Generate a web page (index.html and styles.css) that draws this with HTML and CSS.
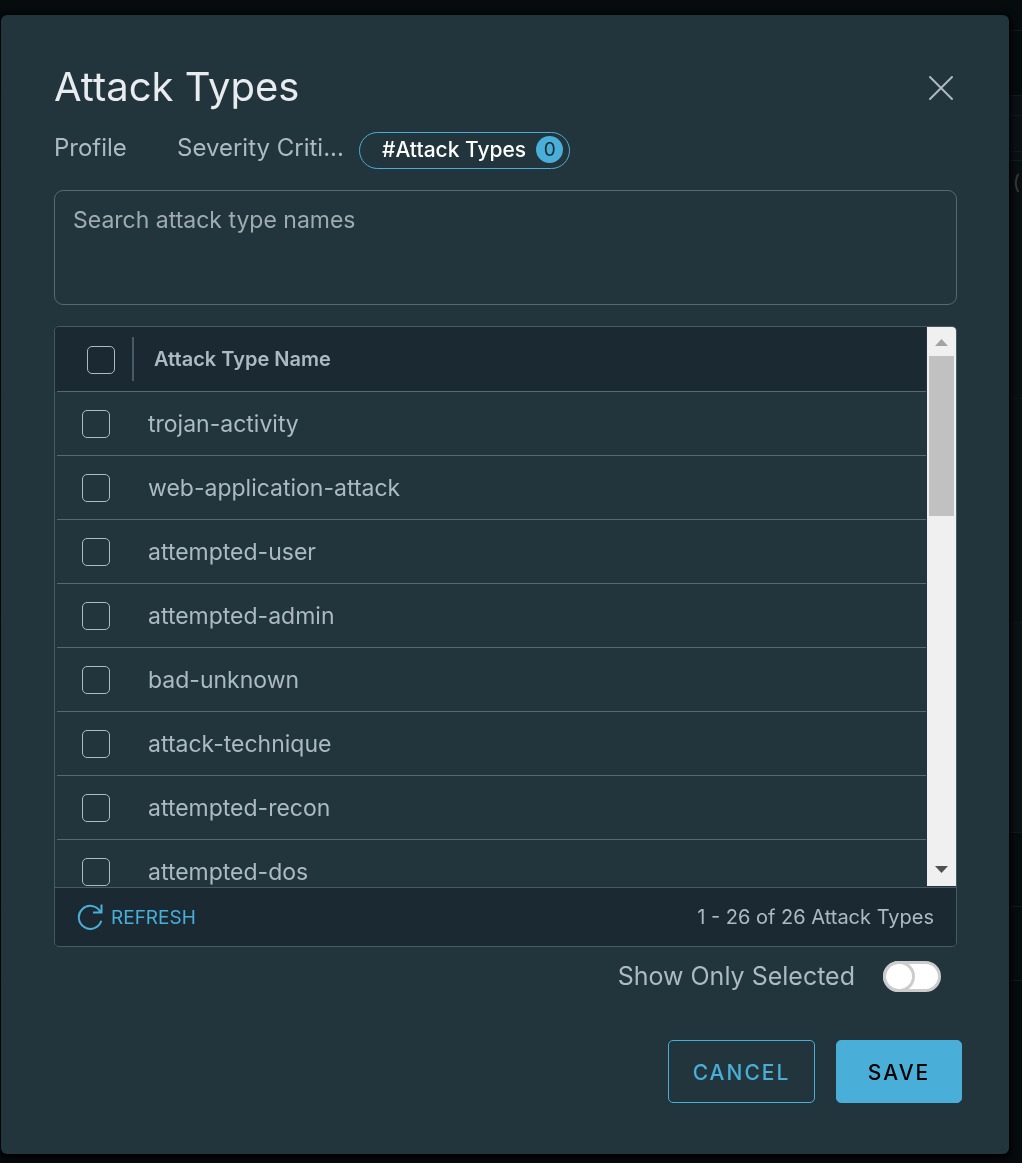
FILE: index.html
```html
<!DOCTYPE html>
<html lang="en">
<head>
<meta charset="utf-8">
<meta name="viewport" content="width=device-width, initial-scale=1">
<title>Attack Types</title>
<link rel="stylesheet" href="styles.css">
</head>
<body>
<div class="backdrop" aria-hidden="true">
  <div class="band band-30"></div>
  <div class="band band-65"></div>
  <div class="band band-20"></div>
  <div class="band band-36"></div>
  <div class="band band-9"></div>
  <div class="band band-238 dashed">(</div>
  <div class="band band-224 dashed"></div>
  <div class="band band-210"></div>
  <div class="band band-74"></div>
  <div class="band band-74"></div>
</div>
<main class="layer">
  <section class="dialog" role="dialog" aria-labelledby="dialog-title">
    <header class="dialog-header">
      <h1 class="title" id="dialog-title">Attack Types</h1>
      <button class="close" type="button" aria-label="Close">
        <svg width="26" height="26" viewBox="0 0 26 26"><path d="M2 2 24 24M24 2 2 24"/></svg>
      </button>
    </header>
    <nav class="tabs">
      <a class="tab tab-profile" href="#profile">Profile</a>
      <a class="tab tab-severity" href="#severity">Severity Criti...</a>
      <a class="tab-active" href="#types">#Attack Types <span class="badge">0</span></a>
    </nav>
    <textarea class="search" aria-label="Search attack type names" placeholder="Search attack type names"></textarea>
    <div class="grid">
      <div class="grid-body">
        <div class="list">
          <table class="table">
            <thead>
              <tr><th class="cell-check"><input class="check" type="checkbox" aria-label="Select all"></th><th class="cell-name" scope="col">Attack Type Name</th></tr>
            </thead>
            <tbody>
              <tr><td class="cell-check"><input class="check" type="checkbox" id="t1"></td><td class="cell-name"><label for="t1">trojan-activity</label></td></tr>
              <tr><td class="cell-check"><input class="check" type="checkbox" id="t2"></td><td class="cell-name"><label for="t2">web-application-attack</label></td></tr>
              <tr><td class="cell-check"><input class="check" type="checkbox" id="t3"></td><td class="cell-name"><label for="t3">attempted-user</label></td></tr>
              <tr><td class="cell-check"><input class="check" type="checkbox" id="t4"></td><td class="cell-name"><label for="t4">attempted-admin</label></td></tr>
              <tr><td class="cell-check"><input class="check" type="checkbox" id="t5"></td><td class="cell-name"><label for="t5">bad-unknown</label></td></tr>
              <tr><td class="cell-check"><input class="check" type="checkbox" id="t6"></td><td class="cell-name"><label for="t6">attack-technique</label></td></tr>
              <tr><td class="cell-check"><input class="check" type="checkbox" id="t7"></td><td class="cell-name"><label for="t7">attempted-recon</label></td></tr>
              <tr><td class="cell-check"><input class="check" type="checkbox" id="t8"></td><td class="cell-name"><label for="t8">attempted-dos</label></td></tr>
            </tbody>
          </table>
        </div>
        <div class="scrollbar" aria-hidden="true">
          <svg class="arrow arrow-up" width="29" height="29" viewBox="0 0 29 29"><path d="M8 19 14.500 12 21 19z"/></svg>
          <div class="track"><div class="thumb"></div></div>
          <svg class="arrow arrow-down" width="29" height="29" viewBox="0 0 29 29"><path d="M8 9h13l-6.500 7z"/></svg>
        </div>
      </div>
      <footer class="grid-footer">
        <button class="refresh" type="button">
          <svg width="26" height="26" viewBox="0 0 26 26"><path d="M24.300 16.800A11.500 11.500 0 1 1 23.200 7.500M24.500 .5v8H16"/></svg>
          REFRESH
        </button>
        <span class="count">1 - 26 of 26 Attack Types</span>
      </footer>
    </div>
    <div class="only-selected">
      <label for="only">Show Only Selected</label>
      <input class="toggle" id="only" type="checkbox" role="switch">
    </div>
    <div class="actions">
      <button class="button cancel" type="button">CANCEL</button>
      <button class="button save" type="button">SAVE</button>
    </div>
  </section>
</main>
</body>
</html>
```
FILE: styles.css
```css
*, *::before { box-sizing: border-box; }
body {
  margin: 0;
  background: #060b0e;
  color: #acbac3;
  font-family: Inter, "Liberation Sans", sans-serif;
  font-size: 23px;
}
button, textarea, input { font: inherit; color: inherit; margin: 0; }
button { padding: 0; background: none; border: 0; cursor: pointer; }
a { color: inherit; text-decoration: none; }
svg { display: block; fill: none; }

/* dimmed page behind the dialog */
.backdrop { position: fixed; inset: 0; overflow: hidden; }
.band { border-bottom: 1px solid #15191c; text-align: right; color: #3b3b3a; }
.dashed { border-bottom-style: dashed; }
.band-30 { height: 31px; }
.band-65 { height: 65px; }
.band-20 { height: 20px; background: #0a1115; }
.band-36 { height: 36px; background: #0a1115; }
.band-9 { height: 9px; background: #0a1115; border-color: #0a212c; }
.band-238 { height: 238px; padding: 9px 2px; font-size: 20px; background: #0a0f12; }
.band-224 { height: 224px; background: #0a0f12; }
.band-210 { height: 210px; background: #0c1113; }
.band-74 { height: 74px; background: #070c0f; }

.layer { position: relative; height: 100vh; min-height: 720px; padding: 15px 13px 9px 1px; }
.dialog {
  display: flex;
  flex-direction: column;
  height: 100%;
  padding: 48px 52px 51px 53px;
  background: #22343c;
  border-radius: 6px;
  box-shadow: 0 2px 6px 2px #000;
}
.dialog-header { display: flex; align-items: center; justify-content: space-between; height: 50px; }
.title { margin: 0; padding-bottom: 2px; color: #e9ecef; font-size: 40px; font-weight: 400; line-height: 46px; }
.close { padding: 3px; }
.close svg { stroke: #acbac3; stroke-width: 2; stroke-linecap: round; }

.tabs { display: flex; align-items: center; height: 37px; margin-top: 19px; font-size: 24px; }
.tab { line-height: 28px; padding-bottom: 6px; white-space: nowrap; }
.tab-profile { width: 123px; }
.tab-severity { width: 182px; }
.tab-active {
  display: flex;
  align-items: center;
  gap: 10px;
  height: 37px;
  padding: 0 6px 2px 22px;
  border: 1px solid #49afd9;
  border-radius: 19px;
  color: #fff;
  font-size: 21px;
  font-weight: 500;
  white-space: nowrap;
}
.badge {
  width: 27px;
  height: 27px;
  border-radius: 50%;
  background: #49afd9;
  color: #1b2a32;
  font-size: 19px;
  font-weight: 400;
  line-height: 27px;
  text-align: center;
}

.search {
  display: block;
  width: 100%;
  height: 115px;
  margin-top: 21px;
  padding: 15px 18px;
  background: transparent;
  border: 1px solid #566a75;
  border-radius: 9px;
  line-height: 28px;
  resize: none;
  outline: 0;
}
.search::placeholder { color: #9fabb2; opacity: 1; }

.grid {
  display: flex;
  flex: 1;
  flex-direction: column;
  min-height: 0;
  margin-top: 21px;
  border: 1px solid #495a67;
  border-radius: 5px;
  overflow: hidden;
}
.grid-body { display: flex; flex: 1; min-height: 0; padding-bottom: 1px; }
.list { flex: 1; overflow-y: auto; scrollbar-width: none; padding: 0 1px 0 2px; }
.table { width: 100%; border-collapse: separate; border-spacing: 0; table-layout: fixed; }
.table th, .table td { height: 64px; padding: 0; border-bottom: 1px solid #566a75; text-align: left; }
.table th { height: 65px; background: #1b2932; font-size: 20px; font-weight: 600; }
.table .cell-check { width: 91px; padding-left: 25px; }
.table th.cell-name { padding-left: 6px; }
/* short divider after the select-all box; the shadow carries the fill to the grid edge */
.table th.cell-check {
  padding: 2px 0 0 30px;
  background: linear-gradient(#495a67, #495a67) no-repeat 75px center / 2px 44px, #1b2932;
  box-shadow: -2px 0 #1b2932;
}
.check {
  display: block;
  appearance: none;
  width: 28px;
  height: 28px;
  border: 1px solid #acbac3;
  border-radius: 5px;
}
.check:checked { background: #49afd9; }

.scrollbar { display: flex; flex-direction: column; width: 29px; background: #f0f0f0; }
.track { flex: 1; padding: 0 2px; }
.thumb { height: 32%; background: #c1c1c1; }
.arrow-up { fill: #a3a3a3; }
.arrow-down { fill: #505050; }

.grid-footer {
  display: flex;
  align-items: center;
  justify-content: space-between;
  height: 59px;
  padding: 0 22px;
  background: #1b2932;
  border-top: 1px solid #495a67;
  font-size: 20px;
}
.refresh { display: flex; align-items: center; gap: 8px; color: #49afd9; font-size: 19px; }
.refresh svg { stroke: #49afd9; stroke-width: 2; }

.only-selected {
  display: flex;
  align-items: center;
  justify-content: flex-end;
  gap: 28px;
  margin: 14px 16px 0 0;
  font-size: 25px;
  line-height: 31px;
}
.toggle {
  display: flex;
  appearance: none;
  width: 58px;
  height: 31px;
  border: 3px solid #ccc;
  border-radius: 16px;
  background: #fff;
}
.toggle::before {
  content: "";
  width: 32px;
  height: 31px;
  margin: -3px;
  border: 3px solid #ccc;
  border-radius: 16px;
}
.toggle:checked::before { margin-left: auto; }

.actions { display: flex; justify-content: flex-end; gap: 21px; margin: 48px -5px 0 0; }
.button {
  height: 63px;
  padding: 2px 0 0;
  border: 1px solid #49afd9;
  border-radius: 5px;
  color: #49afd9;
  font-size: 21px;
  font-weight: 500;
  letter-spacing: 2px;
}
.cancel { width: 147px; }
.save { width: 126px; background: #49afd9; color: #000; }
```
